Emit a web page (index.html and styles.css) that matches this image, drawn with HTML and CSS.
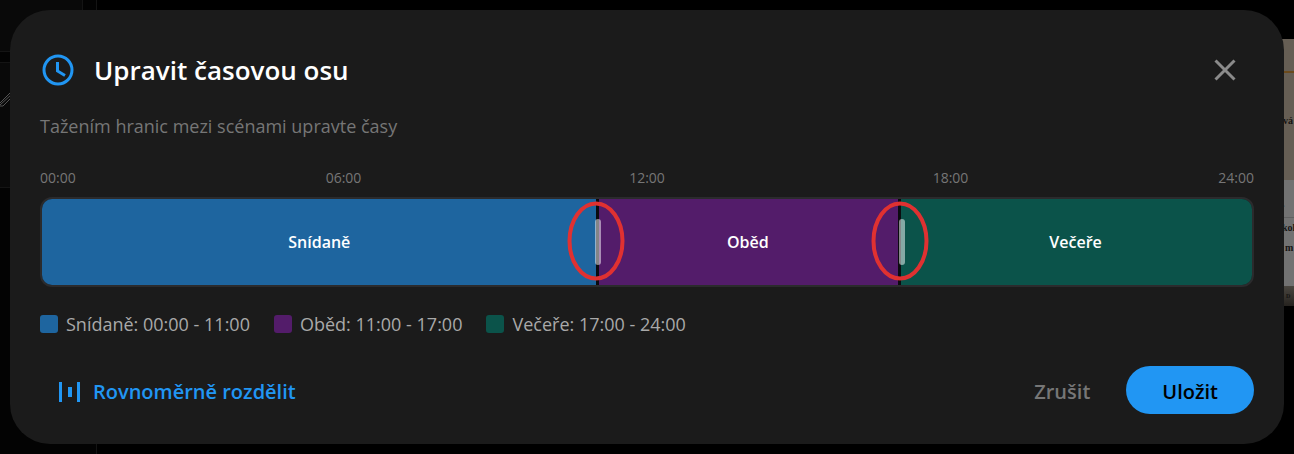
FILE: index.html
```html
<!DOCTYPE html>
<html lang="cs">
<head>
<meta charset="utf-8">
<meta name="viewport" content="width=device-width, initial-scale=1">
<title>Upravit časovou osu</title>
<link rel="stylesheet" href="styles.css">
</head>
<body>
<div class="backdrop" aria-hidden="true">
  <div class="side-panel">
    <div class="side-top"></div>
    <div class="side-card">
      <svg class="pencil" viewBox="0 0 12 16"><path d="M0 12L12 0M0 14L12 3M0 15h3L12 6"/></svg>
    </div>
  </div>
  <div class="preview">
    <div class="preview-head"></div>
    <div class="preview-day"><span>vá</span></div>
    <div class="preview-row">.</div>
    <div class="preview-list"><span>kol</span><span>m</span></div>
    <div class="preview-foot">D</div>
  </div>
</div>

<main class="dialog" role="dialog" aria-labelledby="title">
  <header class="header">
    <svg class="clock" viewBox="0 0 32 32"><circle cx="16" cy="16" r="14"/><path d="M15.500 8v9l7.500 4.500"/></svg>
    <h1 class="title" id="title">Upravit časovou osu</h1>
    <button class="close" type="button" aria-label="Zavřít">
      <svg viewBox="0 0 22 22"><path d="M1.500 1.500l19 19M20.500 1.500l-19 19"/></svg>
    </button>
  </header>
  <p class="hint">Tažením hranic mezi scénami upravte časy</p>

  <div class="scale">
    <span>00:00</span><span>06:00</span><span>12:00</span><span>18:00</span><span>24:00</span>
  </div>
  <div class="track-wrap">
    <div class="track">
      <div class="scene breakfast">Snídaně</div>
      <div class="scene lunch">Oběd</div>
      <div class="scene dinner">Večeře</div>
    </div>
    <div class="handle handle-first"><svg class="ring" viewBox="0 0 58 80"><ellipse cx="29" cy="40" rx="26.500" ry="37.500"/></svg></div>
    <div class="handle handle-second"><svg class="ring" viewBox="0 0 58 80"><ellipse cx="29" cy="40" rx="26.500" ry="37.500"/></svg></div>
  </div>

  <ul class="legend">
    <li><i class="swatch breakfast"></i>Snídaně: 00:00 - 11:00</li>
    <li><i class="swatch lunch"></i>Oběd: 11:00 - 17:00</li>
    <li><i class="swatch dinner"></i>Večeře: 17:00 - 24:00</li>
  </ul>

  <footer class="actions">
    <button class="btn split" type="button">
      <svg viewBox="0 0 22 20"><path d="M0 0h3v20H0zM9 5h4v10H9zM18 0h3v20h-3z"/></svg>
      Rovnoměrně rozdělit
    </button>
    <button class="btn cancel" type="button">Zrušit</button>
    <button class="btn save" type="button">Uložit</button>
  </footer>
</main>
</body>
</html>
```
FILE: styles.css
```css
* { box-sizing: border-box; }

body {
  margin: 0;
  min-height: 100vh;
  padding: 10px;
  background: #000;
  color: #fff;
  font-family: "Segoe UI", "Open Sans", "Noto Sans", sans-serif;
  overflow: hidden;
}

button {
  border: 0;
  padding: 0;
  background: none;
  color: inherit;
  font: inherit;
}

/* Dimmed page behind the dialog */
.backdrop {
  position: absolute;
  inset: 0;
  display: flex;
  justify-content: space-between;
  align-items: flex-start;
}

.side-panel {
  display: flex;
  flex-direction: column;
  gap: 10px;
  width: 97px;
  height: 100%;
  border-right: 1px solid #141414;
  background: #030303;
}

.side-top {
  width: 83px;
  height: 52px;
  border: solid #141414;
  border-width: 0 1px 1px 0;
  background: #090909;
}

.side-card {
  height: 126px;
  padding-top: 28px;
  border: solid #141414;
  border-width: 1px 0;
  background: #090909;
}

.pencil {
  display: block;
  width: 12px;
  height: 16px;
  fill: none;
  stroke: #555;
}

.preview {
  width: 12px;
  margin-top: 39px;
  overflow: hidden;
  color: #161412;
  font: bold 10px/20px "Liberation Serif", serif;
}

.preview-head { height: 34px; border-bottom: 2px solid #6b4a1c; background: #665e54; }
.preview-day { height: 107px; padding: 38px 0 0 1px; background: #665e54; }
.preview-row { height: 38px; padding-top: 14px; border-bottom: 1px solid #606060; background: #727272; }
.preview-list { display: flex; flex-direction: column; height: 68px; background: #727272; }
.preview-list span:last-child { padding-left: 3px; }
.preview-foot { height: 20px; padding-left: 4px; background: linear-gradient(#4a4640, #26231f); font-size: 6px; }

.dialog {
  position: relative;
  display: flex;
  flex-direction: column;
  padding: 36px 30px 30px;
  border-radius: 40px;
  background: #1b1b1b;
}

.header {
  display: flex;
  align-items: center;
  gap: 20px;
  height: 48px;
  padding: 0 18px 0 2px;
}

.clock { width: 32px; height: 32px; fill: none; stroke: #2196f3; stroke-width: 3; }

.title {
  flex: 1;
  margin: 0;
  font-size: 26px;
  font-weight: 600;
  line-height: 36px;
}

.close svg {
  display: block;
  width: 22px;
  height: 22px;
  stroke: #8b8b8b;
  stroke-width: 3;
}

.hint {
  margin: 20px 0 0;
  color: #767676;
  font-size: 18px;
  line-height: 24px;
}

.scale {
  display: grid;
  grid-template-columns: 1fr 2fr 2fr 2fr 1fr;
  margin-top: 30px;
  color: #767676;
  font-size: 14px;
  line-height: 20px;
  text-align: center;
}

.scale span:first-child { text-align: left; }
.scale span:last-child { text-align: right; }

.track-wrap { position: relative; margin-top: 9px; }

.track {
  display: grid;
  grid-template-columns: 11fr 6fr 7fr;
  height: 90px;
  border: 2px solid #2b2b2d;
  border-radius: 12px;
  overflow: hidden;
}

.scene {
  position: relative;
  display: grid;
  place-items: center;
  font-size: 16px;
  font-weight: 600;
}

/* Divider drawn over the boundary between two scenes */
.scene + .scene::before {
  content: "";
  position: absolute;
  top: 0;
  bottom: 0;
  left: -1px;
  width: 3px;
  background: #0b0b0f;
}

.breakfast { background: #1e659f; }
.lunch { background: #531c6a; }
.dinner { background: #0b534a; }

.handle {
  position: absolute;
  top: 22px;
  width: 6px;
  height: 46px;
  border-radius: 3px;
  background: rgb(255 255 255 / 50%);
}

.handle-first { left: calc(100% * 11 / 24 - 1px); }
.handle-second { left: calc(100% * 17 / 24 - 1px); }

.ring {
  position: absolute;
  top: -18px;
  left: -28px;
  width: 58px;
  height: 80px;
  fill: none;
  stroke: #e03131;
  stroke-width: 4;
}

.legend {
  display: flex;
  gap: 24px;
  margin: 25px 0 0;
  padding: 0;
  list-style: none;
  color: #a9a9a9;
  font-size: 18px;
  line-height: 24px;
}

.legend li { display: flex; align-items: center; gap: 8px; }

.swatch { width: 18px; height: 18px; border-radius: 3px; }

.actions {
  display: flex;
  align-items: center;
  margin-top: 30px;
  font-size: 20px;
  font-weight: 600;
}

.btn { height: 48px; padding-top: 3px; white-space: nowrap; }

.split {
  display: flex;
  align-items: center;
  gap: 12px;
  margin-right: auto;
  padding-left: 19px;
  color: #2196f3;
}

.split svg { width: 22px; height: 20px; fill: currentColor; }

.cancel { padding-inline: 36px; color: #767676; }

.save {
  padding-inline: 36px;
  border-radius: 24px;
  background: #2196f3;
  color: #000;
}
```
